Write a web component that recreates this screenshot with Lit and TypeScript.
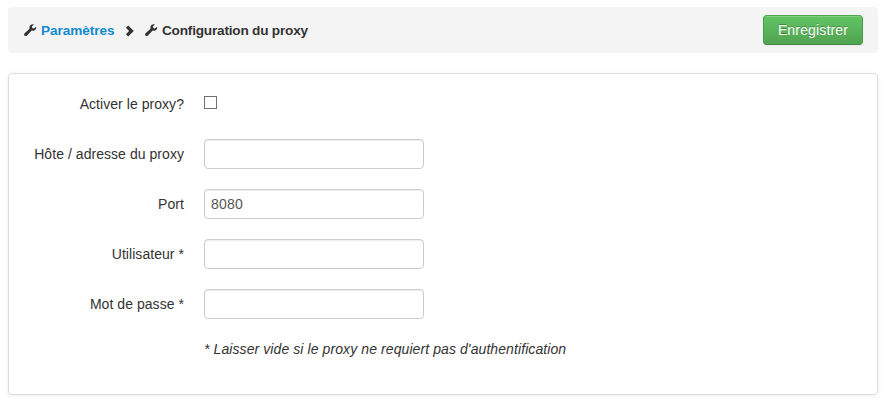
import { LitElement, html, css } from "lit";
import { customElement } from "lit/decorators.js";

const wrench = html`<svg class="wrench" width="13" height="13" viewBox="0 0 13 13">
  <path d="M9.9.4 8 2.2 8.2 4 9.8 4.4 12.2 2.7C12.4 4.5 11.6 5.9 10.4 6.4 9.5 6.8 8.5 6.8 7.7 6.6L3 11.6C1.5 13.1-.9 10.9.6 9.3L5.6 4.7C5.1 3.3 5.5 2.1 6.5 1.1 7.5.2 8.8 0 9.9.4Z" />
</svg>`;

const chevron = html`<svg class="chevron" width="10" height="12" viewBox="0 0 10 12">
  <path d="M3.2.5.9 2.8 4.1 6 .9 9.2 3.2 11.5 8.8 6Z" />
</svg>`;

@customElement("app-root")
export class AppRoot extends LitElement {
  static styles = css`
    :host {
      display: block;
      box-sizing: border-box;
      height: 406px;
      padding: 7px 9px 0 8px;
      overflow: hidden;
      background: #fff;
      color: #333;
      font: 14px/20px "Liberation Sans", Arial, sans-serif;
      letter-spacing: 0.05px;
    }
    * { box-sizing: border-box; }
    .bar {
      display: flex;
      align-items: center;
      height: 46px;
      padding: 0 15px;
      border-radius: 4px;
      background: #f4f4f4;
      font-size: 13.6px;
      font-weight: bold;
      letter-spacing: -0.2px;
    }
    .bar a, .bar span { padding-top: 1px; }
    svg { display: block; flex: none; fill: #333; }
    .wrench { margin: 1px 4px 0 1px; }
    .chevron { margin: 2px 9px 0 11px; }
    a {
      width: 73px;
      color: #118ad0;
      letter-spacing: -0.05px;
      text-decoration: none;
      white-space: nowrap;
    }
    .save {
      width: 100px;
      height: 30px;
      margin-left: auto;
      padding: 0;
      border: 1px solid;
      border-color: #51a351 #4b994b #448944;
      border-radius: 4px;
      background: linear-gradient(#62c462, #51a351);
      box-shadow: inset 0 1px 0 rgba(255, 255, 255, 0.2), 0 1px 2px rgba(0, 0, 0, 0.05);
      color: #fff;
      font: inherit;
      font-size: 14px;
      font-weight: normal;
      letter-spacing: 0.16px;
      text-shadow: 0 -1px 0 rgba(0, 0, 0, 0.25);
    }
    .panel {
      height: 322px;
      margin-top: 20px;
      padding: 15px 0 0 15px;
      border: 1px solid #ddd;
      border-radius: 4px;
      box-shadow: 0 1px 5px rgba(0, 0, 0, 0.07);
    }
    .row {
      display: grid;
      grid-template-columns: 160px 1fr;
      column-gap: 20px;
      height: 30px;
      margin-bottom: 20px;
      align-items: center;
    }
    label { text-align: right; }
    .text {
      width: 220px;
      height: 30px;
      padding: 4px 6px;
      border: 1px solid #ccc;
      border-radius: 4px;
      background: #fff;
      box-shadow: inset 0 1px 1px rgba(0, 0, 0, 0.075);
      color: #555;
      font: inherit;
      letter-spacing: 0.2px;
      outline: none;
    }
    .check {
      appearance: none;
      width: 13px;
      height: 13px;
      margin: 0 0 3px;
      border: 1px solid #707070;
      background: #fff;
    }
    .note { margin-left: 180px; font-style: italic; letter-spacing: 0.09px; }
  `;

  private field(id: string, label: string, value = "", type = "text") {
    return html`<div class="row">
      <label for=${id}>${label}</label>
      <input class="text" id=${id} type=${type} .value=${value} />
    </div>`;
  }

  render() {
    return html`
      <nav class="bar">
        ${wrench}<a href="#">Paramètres</a>${chevron}${wrench}<span>Configuration du proxy</span>
        <button class="save">Enregistrer</button>
      </nav>
      <form class="panel">
        <div class="row">
          <label for="enabled">Activer le proxy?</label>
          <input class="check" id="enabled" type="checkbox" />
        </div>
        ${this.field("host", "Hôte / adresse du proxy")}
        ${this.field("port", "Port", "8080")}
        ${this.field("user", "Utilisateur *")}
        ${this.field("password", "Mot de passe *", "", "password")}
        <div class="note">* Laisser vide si le proxy ne requiert pas d'authentification</div>
      </form>
    `;
  }
}
